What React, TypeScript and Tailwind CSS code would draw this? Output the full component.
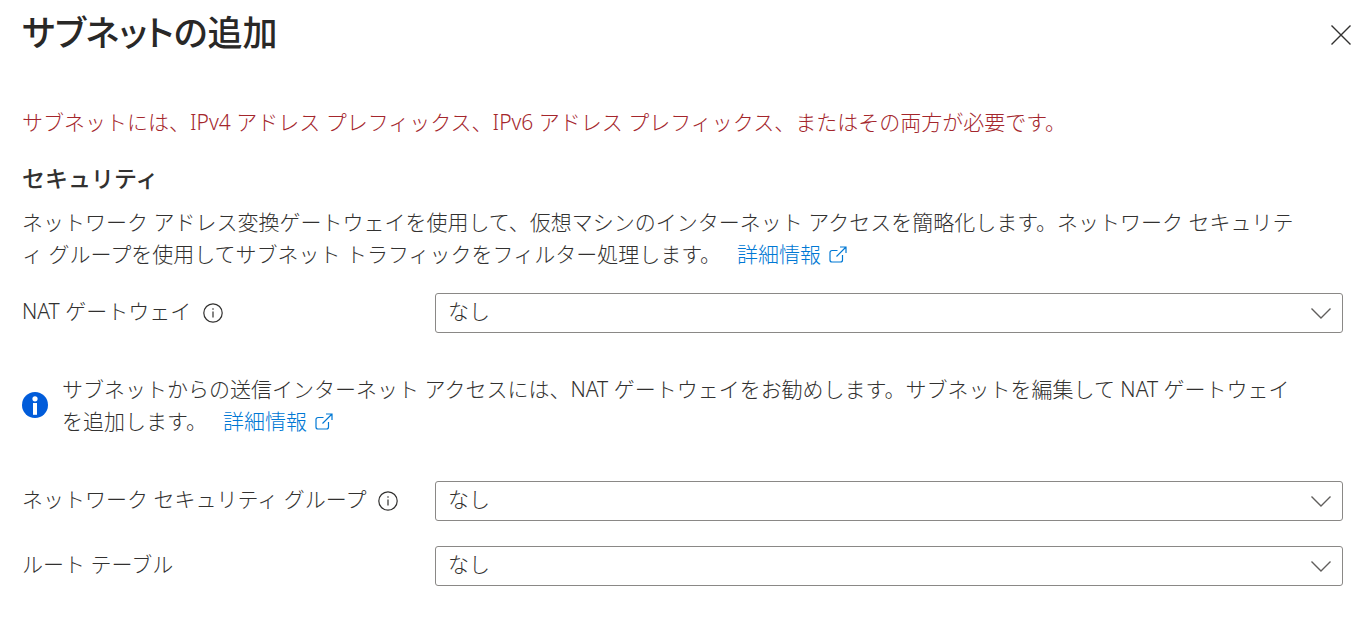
import type { ReactNode } from 'react'

interface SelectRowProps {
  id: string
  label: string
  info?: boolean
}

function InfoOutline() {
  return (
    <svg className="w-5 h-5 shrink-0" viewBox="0 0 20 20" fill="none" stroke="#323130" aria-hidden="true">
      <circle cx="10" cy="10" r="9.2" strokeWidth="1.2" />
      <path d="M10 8.5v6" strokeWidth="1.2" />
      <circle cx="10" cy="6" r="0.8" fill="#323130" stroke="none" />
    </svg>
  )
}

function InfoFilled() {
  return (
    <svg className="w-[26px] h-[26px] shrink-0" viewBox="0 0 26 26" aria-hidden="true">
      <circle cx="13" cy="13" r="13" fill="#015cda" />
      <circle cx="13" cy="6.8" r="2.6" fill="#fff" />
      <rect x="11" y="11" width="4" height="11.8" fill="#fff" />
    </svg>
  )
}

function MoreLink({ children }: { children: ReactNode }) {
  return (
    <a href="#details" className="ml-4 whitespace-nowrap text-[#0078d4]">
      {children}
      <svg className="ml-2 inline-block w-[18px] h-[18px] align-[-2px]" viewBox="0 0 18 18" fill="none" stroke="currentColor" strokeWidth="1.2" aria-hidden="true">
        <path d="M8.5 4.5H3a2 2 0 0 0-2 2V14a2 2 0 0 0 2 2h8.500a2 2 0 0 0 2-2V9" />
        <path d="M11 1h6v6M17 1L7.500 10.500" />
      </svg>
    </a>
  )
}

function SelectRow({ id, label, info }: SelectRowProps) {
  return (
    <div className="flex items-center">
      <div className="flex w-[413px] shrink-0 items-center gap-3">
        <label htmlFor={id} className="pb-1">{label}</label>
        {info && <InfoOutline />}
      </div>
      <div className="relative flex-1">
        <select
          id={id}
          className="block h-10 w-full appearance-none rounded-[3px] border border-[#8a8886] bg-white pl-3 pr-12 pb-1 text-[#323130]"
        >
          <option>なし</option>
        </select>
        <svg className="pointer-events-none absolute right-3 top-2.5 w-5 h-5" viewBox="0 0 20 20" fill="none" stroke="#605e5c" strokeWidth="1.4" aria-hidden="true">
          <path d="M0.5 5.5l9.5 9.500 9.500-9.500" />
        </svg>
      </div>
    </div>
  )
}

export default function App() {
  return (
    <main className="bg-white pl-[22px] pr-[19px] pb-9 font-['Noto_Sans','Noto_Sans_CJK_JP',sans-serif] text-[21px] font-light leading-8 text-[#323130]">
      <header className="flex items-center justify-between pt-2">
        <h1 className="pb-1 text-[35px] font-medium leading-[50px] text-[#292827] [font-feature-settings:'palt']">サブネットの追加</h1>
        <button type="button" aria-label="閉じる" className="-mr-2">
          <svg className="w-5 h-5" viewBox="0 0 20 20" stroke="#323130" strokeWidth="1.4" aria-hidden="true">
            <path d="M0.5 0.5l19 19M19.5 0.5l-19 19" />
          </svg>
        </button>
      </header>

      <p className="mt-11 text-[#a4262c]">
        サブネットには、IPv4 アドレス プレフィックス、IPv6 アドレス プレフィックス、またはその両方が必要です。
      </p>

      <section>
        <h2 className="mt-6 text-[23px] font-medium">セキュリティ</h2>
        <p className="mt-3 pr-9">
          ネットワーク アドレス変換ゲートウェイを使用して、仮想マシンのインターネット アクセスを簡略化します。ネットワーク セキュリティ グループを使用してサブネット トラフィックをフィルター処理します。
          <MoreLink>詳細情報</MoreLink>
        </p>

        <div className="mt-[23px]">
          <SelectRow id="nat-gateway" label="NAT ゲートウェイ" info />
        </div>

        <div className="mt-10 flex items-center gap-3.5">
          <InfoFilled />
          <p className="pr-9">
            サブネットからの送信インターネット アクセスには、NAT ゲートウェイをお勧めします。サブネットを編集して NAT ゲートウェイを追加します。
            <MoreLink>詳細情報</MoreLink>
          </p>
        </div>

        <div className="mt-11 flex flex-col gap-[25px]">
          <SelectRow id="security-group" label="ネットワーク セキュリティ グループ" info />
          <SelectRow id="route-table" label="ルート テーブル" />
        </div>
      </section>
    </main>
  )
}
